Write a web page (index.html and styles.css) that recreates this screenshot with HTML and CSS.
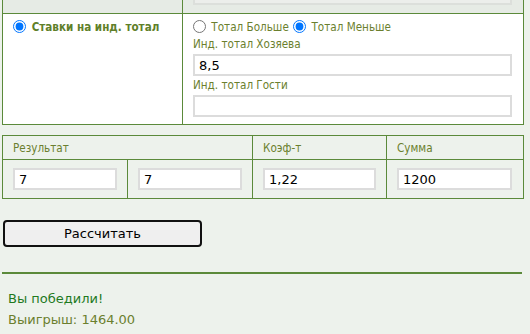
FILE: index.html
```html
<!DOCTYPE html>
<html lang="ru">
<head>
    <meta charset="UTF-8">
    <meta name="viewport" content="width=device-width, initial-scale=1.0">
    <title>Калькулятор ставок</title>
    <link rel="stylesheet" href="styles.css">
</head>
<body>
    <div class="container">
        <table class="bet-table">
            <colgroup>
                <col class="w-left">
                <col class="w-right">
            </colgroup>
            <tr class="prev-row">
                <td></td>
                <td class="prev-cell"><div class="prev-input"></div></td>
            </tr>
            <tr>
                <td class="type-cell">
                    <label class="bet-type"><input type="radio" name="bet" checked> Ставки на инд. тотал</label>
                </td>
                <td class="opts-cell">
                    <div class="options">
                        <label><input type="radio" name="total"> Тотал Больше</label>
                        <label><input type="radio" name="total" checked> Тотал Меньше</label>
                    </div>
                    <div class="field-label">Инд. тотал Хозяева</div>
                    <input type="text" class="field" value="8,5">
                    <div class="field-label">Инд. тотал Гости</div>
                    <input type="text" class="field" value="">
                </td>
            </tr>
        </table>

        <table class="result-table">
            <colgroup>
                <col class="w-res">
                <col class="w-res">
                <col class="w-coef">
                <col class="w-sum">
            </colgroup>
            <tr class="head">
                <td colspan="2">Результат</td>
                <td>Коэф-т</td>
                <td>Сумма</td>
            </tr>
            <tr class="values">
                <td><input type="text" class="field" value="7"></td>
                <td><input type="text" class="field" value="7"></td>
                <td><input type="text" class="field" value="1,22"></td>
                <td class="last"><input type="text" class="field" value="1200"></td>
            </tr>
        </table>

        <button class="button">Рассчитать</button>

        <hr class="divider">

        <p class="win">Вы победили!</p>
        <p class="payout">Выигрыш: 1464.00</p>
    </div>
</body>
</html>
```

FILE: styles.css
```css
body {
    margin: 0;
    background-color: #edf2ec;
    font-family: "DejaVu Sans Condensed", "DejaVu Sans", sans-serif;
    font-size: 11.6px;
    color: #6b7f2e;
}
.container {
    width: 520px;
    padding: 0 8px 0 2px;
}
table {
    border-collapse: collapse;
    table-layout: fixed;
    width: 521px;
}
td {
    border: 1px solid #5b8a3a;
    vertical-align: top;
    padding: 0;
}
.w-left { width: 180px; }
.w-right { width: 341px; }
.w-res { width: 125px; }
.w-coef { width: 134px; }
.w-sum { width: 137px; }

.prev-row td {
    height: 13px;
    border-top: none;
    background-color: #e6ebe5;
}
.prev-cell {
    padding: 0 11px 0 10px;
}
.prev-input {
    height: 3px;
    border: 2px solid #dcdfdb;
    border-top: none;
    background-color: #eceeeb;
}

.type-cell,
.opts-cell {
    background-color: #fff;
}
.type-cell {
    padding: 6px 8px 0 10px;
}
.opts-cell {
    padding: 6px 11px 7px 10px;
}
.bet-type {
    display: block;
    font-weight: bold;
    line-height: 14px;
    color: #5f7f2a;
}
input[type="radio"] {
    margin: 0 2px 0 0;
    width: 13px;
    height: 13px;
    vertical-align: top;
}
.options {
    line-height: 14px;
}
.options label {
    margin-right: 1px;
}
.field-label {
    margin: 4px 0 3px;
    line-height: 13px;
}
.field-label + .field + .field-label {
    margin-top: 3px;
}
.field {
    display: block;
    box-sizing: border-box;
    width: 100%;
    height: 22px;
    margin: 0;
    border: 2px solid #dcdcdc;
    padding: 0 4px;
    font-family: "DejaVu Sans", Verdana, sans-serif;
    font-size: 13px;
    color: #000;
    background: #fff;
    outline: none;
}

.result-table {
    margin-top: 10px;
}
.result-table .head td {
    height: 23px;
    padding: 0 10px;
    vertical-align: middle;
}
.result-table .values td {
    padding: 8px 10px 8px 10px;
}
.result-table .values td.last {
    padding-right: 11px;
}

.button {
    display: block;
    margin: 21px 0 0 1px;
    width: 199px;
    height: 27px;
    background-color: #efefef;
    border: 2px solid #111;
    border-radius: 4px;
    font-family: "DejaVu Sans", Verdana, sans-serif;
    font-size: 13px;
    color: #000;
}
.divider {
    margin: 25px 0 0;
    width: 520px;
    height: 2px;
    border: none;
    background-color: #5b8a3a;
}
.win,
.payout {
    margin: 0 0 0 6px;
    font-family: "DejaVu Sans", Verdana, sans-serif;
    font-size: 13px;
    line-height: 16px;
}
.win {
    margin-top: 17px;
    color: #1f7a1f;
}
.payout {
    margin-top: 5px;
    color: #6b7f2e;
}
```
